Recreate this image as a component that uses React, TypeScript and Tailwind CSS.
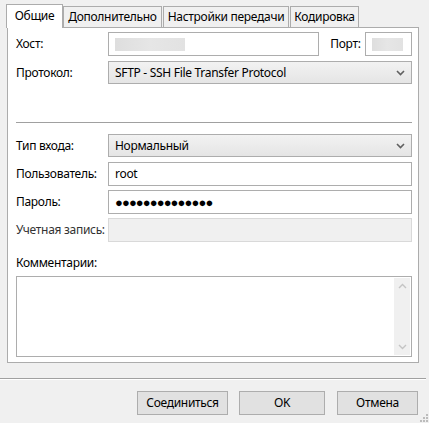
import { ReactNode } from "react"

const font = { fontFamily: '"Noto Sans", "Segoe UI", sans-serif' }

function Tab({ label, active, width }: { label: string; active?: boolean; width: string }) {
  if (active) {
    return (
      <div className={`relative z-10 -mb-px flex h-[24px] ${width} items-center justify-center border border-b-0 border-[#acacac] bg-white pb-[2px]`}>
        {label}
      </div>
    )
  }
  return (
    <div className={`flex h-[21px] ${width} items-center justify-center border border-b-0 border-[#acacac] bg-[#f0f0f0]`}>
      {label}
    </div>
  )
}

function Row({ label, children, className = "" }: { label: string; children: ReactNode; className?: string }) {
  return (
    <div className={`flex items-center ${className}`}>
      <div className="w-[92px] shrink-0 whitespace-nowrap">{label}</div>
      <div className="flex-1">{children}</div>
    </div>
  )
}

function Chevron() {
  return (
    <svg width="9" height="6" viewBox="0 0 9 6" className="shrink-0">
      <polyline points="1,1 4.5,4.5 8,1" fill="none" stroke="#606060" strokeWidth="1.6" />
    </svg>
  )
}

function Select({ value }: { value: string }) {
  return (
    <div className="flex h-[23px] items-center justify-between border border-[#adadad] bg-gradient-to-b from-[#f2f2f2] to-[#e5e5e5] pl-[6px] pr-[6px]">
      <span>{value}</span>
      <Chevron />
    </div>
  )
}

function Input({ value, className = "" }: { value?: ReactNode; className?: string }) {
  return (
    <div className={`flex h-[24px] items-center border border-[#adadad] bg-white pl-[6px] ${className}`}>
      {value}
    </div>
  )
}

function Blur({ width }: { width: string }) {
  return <div className={`h-[13px] ${width} bg-gradient-to-r from-[#dedede] via-[#e6e6e6] to-[#e2e2e2]`} />
}

function Button({ label, width }: { label: string; width: string }) {
  return (
    <div className={`flex h-[24px] ${width} items-center justify-center border border-[#adadad] bg-[#e1e1e1]`}>
      {label}
    </div>
  )
}

export default function App() {
  return (
    <div className="relative h-[423px] w-[429px] overflow-hidden bg-[#f0f0f0] text-[12px] leading-none tracking-[-0.3px] text-black" style={font}>
      <div className="flex items-end pl-[6px] pt-[4px]">
        <Tab label="Общие" active width="w-[57px]" />
        <Tab label="Дополнительно" width="w-[99px]" />
        <div className="w-px" />
        <Tab label="Настройки передачи" width="w-[126px]" />
        <div className="w-px" />
        <Tab label="Кодировка" width="w-[69px]" />
      </div>

      <div className="ml-[7px] h-[336px] w-[412px] border border-[#acacac] bg-white pl-[8px] pr-[6px] pt-[4px]">
        <div className="flex items-center">
          <div className="w-[92px] shrink-0">Хост:</div>
          <Input className="w-[212px]" value={<Blur width="w-[70px]" />} />
          <div className="ml-[11px] w-[35px]">Порт:</div>
          <Input className="w-[47px] pl-[3px]" value={<Blur width="w-[31px]" />} />
        </div>

        <Row label="Протокол:" className="mt-[5px]">
          <Select value="SFTP - SSH File Transfer Protocol" />
        </Row>

        <div className="mt-[38px] h-px bg-[#a0a0a0]" />

        <Row label="Тип входа:" className="mt-[11px]">
          <Select value="Нормальный" />
        </Row>
        <Row label="Пользователь:" className="mt-[5px]">
          <Input value="root" />
        </Row>
        <Row label="Пароль:" className="mt-[4px]">
          <Input value={<span className="text-[13px] tracking-[-0.9px]">●●●●●●●●●●●●●●</span>} />
        </Row>
        <Row label="Учетная запись:" className="mt-[4px] text-[#333]">
          <div className="h-[24px] border border-[#d9d9d9] bg-[#f0f0f0]" />
        </Row>

        <div className="mt-[15px]">Комментарии:</div>
        <div className="mt-[7px] flex h-[81px] border border-[#adadad] bg-white">
          <div className="flex-1" />
          <div className="my-[1px] mr-[1px] flex w-[16px] flex-col items-center justify-between bg-[#f0f0f0] py-[5px]">
            <svg width="9" height="6" viewBox="0 0 9 6">
              <polyline points="1,5 4.5,1.5 8,5" fill="none" stroke="#c4c4c4" strokeWidth="1.4" />
            </svg>
            <svg width="9" height="6" viewBox="0 0 9 6">
              <polyline points="1,1 4.5,4.5 8,1" fill="none" stroke="#c4c4c4" strokeWidth="1.4" />
            </svg>
          </div>
        </div>
      </div>

      <div className="mt-[15px] h-px w-[426px] bg-[#a0a0a0]" />
      <div className="h-px w-[426px] bg-white" />

      <div className="mt-[11px] flex pl-[137px]">
        <Button label="Соединиться" width="w-[91px]" />
        <div className="w-[11px]" />
        <Button label="OK" width="w-[86px]" />
        <div className="w-[12px]" />
        <Button label="Отмена" width="w-[81px]" />
      </div>

      <svg className="absolute bottom-0 right-0" width="10" height="10" viewBox="0 0 10 10">
        {[
          [7, 1], [7, 4], [4, 4], [7, 7], [4, 7], [1, 7],
        ].map(([x, y], i) => (
          <rect key={i} x={x} y={y} width="2" height="2" fill="#bcbcbc" />
        ))}
      </svg>
    </div>
  )
}
